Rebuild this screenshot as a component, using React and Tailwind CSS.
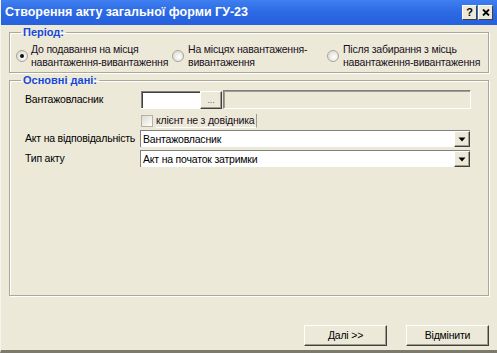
import React from "react";

const font = { fontFamily: '"Liberation Sans", Arial, sans-serif' };

function Radio({ checked }) {
  return (
    <svg width="12" height="12" viewBox="0 0 12 12" className="shrink-0">
      <defs>
        <radialGradient id={checked ? "rg1" : "rg0"} cx="0.6" cy="0.6" r="0.7">
          <stop offset="0" stopColor="#ffffff" />
          <stop offset="1" stopColor="#d8d6cc" />
        </radialGradient>
      </defs>
      <circle cx="6" cy="6" r="5.5" fill={`url(#${checked ? "rg1" : "rg0"})`} stroke="#a8a597" />
      {checked && <circle cx="6" cy="6" r="2" fill="#111" />}
    </svg>
  );
}

function Arrow() {
  return (
    <svg width="8" height="5" viewBox="0 0 8 5">
      <path d="M0.5 0.5 H7.5 L4 4.5 Z" fill="#000" />
    </svg>
  );
}

function Select({ value }) {
  return (
    <div className="flex h-[17px] w-[330px] items-stretch border-t border-l border-[#808080] bg-white shadow-[inset_0_-1px_0_#fff]">
      <div className="flex flex-1 items-center whitespace-nowrap pl-[2px] leading-none text-black">{value}</div>
      <div className="flex w-[16px] items-center justify-center border-t border-l border-white border-r border-b border-r-[#404040] border-b-[#404040] bg-[#ece9d8] shadow-[inset_-1px_-1px_0_#a09d8f]">
        <Arrow />
      </div>
    </div>
  );
}

function Button({ children }) {
  return (
    <div className="flex h-[21px] w-[83px] items-center justify-center whitespace-nowrap border border-t-white border-l-white border-r-[#404040] border-b-[#404040] bg-[#ece9d8] text-[10.5px] tracking-[-0.2px] text-black shadow-[inset_-1px_-1px_0_#a09d8f]">
      {children}
    </div>
  );
}

export default function App() {
  return (
    <div
      className="flex h-[353px] w-[497px] flex-col border-b-[3px] border-b-[#7c7a6d] border-l border-l-[#f4f3ee] bg-[#ece9d8] text-black"
      style={font}
    >
      {/* Title bar */}
      <div className="flex h-[25px] shrink-0 items-center justify-between bg-gradient-to-b from-[#3f7ff0] via-[#2c69e3] to-[#2560dd] pl-[4px] pr-[4px]">
        <span className="whitespace-nowrap text-[12.5px] font-bold text-white">Створення акту загальної форми ГУ-23</span>
        <div className="flex gap-[1px]">
          <div className="flex h-[15px] w-[15px] items-center justify-center border border-t-white border-l-white border-r-[#404040] border-b-[#404040] bg-[#ece9d8] text-[11px] font-bold leading-none text-black">
            ?
          </div>
          <div className="flex h-[15px] w-[15px] items-center justify-center border border-t-white border-l-white border-r-[#404040] border-b-[#404040] bg-[#ece9d8]">
            <svg width="8" height="7" viewBox="0 0 8 7">
              <path d="M1 0.5 L7 6.5 M7 0.5 L1 6.5" stroke="#000" strokeWidth="1.8" />
            </svg>
          </div>
        </div>
      </div>

      <div className="flex flex-1 flex-col pl-[8px] pr-[8px]">
        {/* Period group */}
        <fieldset className="mt-[1px] h-[47px] border border-[#aca899] shadow-[inset_1px_1px_0_#fff,1px_1px_0_#fff]">
          <legend className="ml-[11px] px-[2px] text-[11px] font-bold leading-[13px] text-[#1448d8]">Період:</legend>
          <div className="ml-[6px] mt-[4px] grid grid-cols-[156px_155px_1fr] whitespace-nowrap text-[10.5px] leading-[13px] tracking-[-0.2px] text-[#1a0f22]">
            <div className="flex items-center gap-[3px]">
              <Radio checked />
              <span>
                До подавання на місця
                <br />
                навантаження-вивантаження
              </span>
            </div>
            <div className="flex items-center gap-[4px]">
              <Radio />
              <span>
                На місцях навантаження-
                <br />
                вивантаження
              </span>
            </div>
            <div className="flex items-center gap-[4px]">
              <Radio />
              <span>
                Після забирання з місць
                <br />
                навантаження-вивантаження
              </span>
            </div>
          </div>
        </fieldset>

        {/* Main group */}
        <fieldset className="mt-[1px] h-[222px] border border-[#aca899] shadow-[inset_1px_1px_0_#fff,1px_1px_0_#fff]">
          <legend className="ml-[11px] px-[2px] text-[11px] font-bold leading-[13px] text-[#1448d8]">Основні дані:</legend>
          <div className="ml-[15px] mt-[3px] flex flex-col whitespace-nowrap text-[10.5px] tracking-[-0.2px]">
            <div className="flex h-[19px] items-center">
              <span className="w-[116px]">Вантажовласник</span>
              <div className="h-[17px] w-[59px] border-t border-l border-[#808080] bg-white shadow-[inset_1px_1px_0_#404040,0_1px_0_#fff]" />
              <div className="flex h-[18px] w-[22px] items-end justify-center border border-t-white border-l-white border-r-[#404040] border-b-[#404040] bg-[#ece9d8] pb-[3px] text-[9px] leading-none text-[#6a5a8a] shadow-[inset_-1px_-1px_0_#a09d8f]">
                ...
              </div>
              <div className="ml-px h-[19px] w-[248px] border border-t-[#808080] border-l-[#808080] border-r-white border-b-white shadow-[inset_1px_1px_0_#a09d8f]" />
            </div>
            <div className="ml-[116px] mt-[5px] flex h-[13px] items-center">
              <div className="h-[12px] w-[12px] border border-[#b5b2a4] bg-gradient-to-br from-[#dcdbd2] to-white" />
              <span className="ml-[3px] border-r border-b border-r-[#a09d8f] border-b-white pr-[2px] leading-[13px] text-[#1a0f22]">
                клієнт не з довідника
              </span>
            </div>
            <div className="mt-[3px] flex h-[17px] items-center">
              <span className="w-[115px]">Акт на відповідальність</span>
              <Select value="Вантажовласник" />
            </div>
            <div className="mt-[3px] flex h-[17px] items-center">
              <span className="w-[115px]">Тип акту</span>
              <Select value="Акт на початок затримки" />
            </div>
          </div>
        </fieldset>

        <div className="mt-[29px] flex justify-end gap-[19px] pr-0">
          <Button>Далі &gt;&gt;</Button>
          <Button>Відмінити</Button>
        </div>
      </div>
    </div>
  );
}
